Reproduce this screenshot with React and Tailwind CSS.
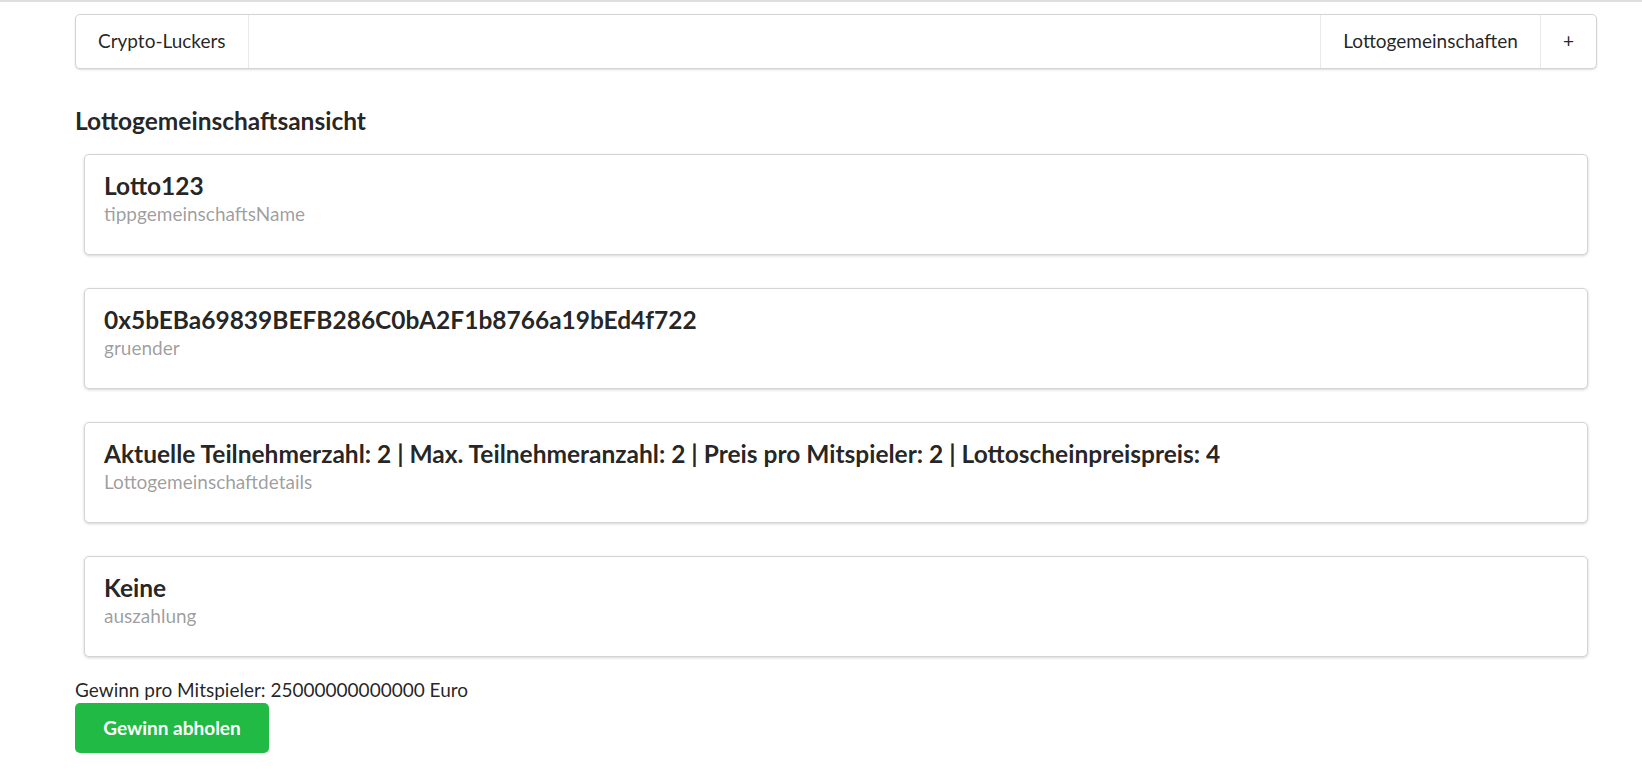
const cards = [
  { header: 'Lotto123', meta: 'tippgemeinschaftsName' },
  { header: '0x5bEBa69839BEFB286C0bA2F1b8766a19bEd4f722', meta: 'gruender' },
  {
    header:
      'Aktuelle Teilnehmerzahl: 2 | Max. Teilnehmeranzahl: 2 | Preis pro Mitspieler: 2 | Lottoscheinpreispreis: 4',
    meta: 'Lottogemeinschaftdetails',
  },
  { header: 'Keine', meta: 'auszahlung' },
]

export default function App() {
  return (
    <div className="min-h-screen border-t-2 border-[#dedede] bg-white font-['Lato',sans-serif] text-[19px] text-[rgba(0,0,0,0.87)]">
      <div className="ml-[75px] w-[1522px] pt-[12px]">
        <nav className="flex h-[55px] items-stretch rounded-[5px] border border-[#d4d4d5] bg-white shadow-[0_1px_2px_0_rgba(34,36,38,0.15)]">
          <a className="flex items-center border-r border-[rgba(34,36,38,0.1)] px-[22px]">Crypto-Luckers</a>
          <div className="flex-1" />
          <a className="flex items-center border-l border-[rgba(34,36,38,0.1)] px-[22px]">Lottogemeinschaften</a>
          <a className="flex items-center border-l border-[rgba(34,36,38,0.1)] px-[22px]">+</a>
        </nav>

        <h3 className="mt-[37px] text-[24.5px] font-bold leading-[29px]">Lottogemeinschaftsansicht</h3>

        <div className="mt-[19px] flex flex-col gap-[33px] px-[9px]">
          {cards.map((card) => (
            <div
              key={card.meta}
              className="h-[101px] rounded-[5px] border border-[#d4d4d5] bg-white px-[19px] pt-[16px] shadow-[0_1px_3px_0_#d4d4d5]"
            >
              <div className="text-[24.5px] font-bold leading-[30px]">{card.header}</div>
              <div className="leading-[26px] text-[rgba(0,0,0,0.4)]">{card.meta}</div>
            </div>
          ))}
        </div>

        <p className="mt-[19px] leading-[27px]">Gewinn pro Mitspieler: 25000000000000 Euro</p>
        <button className="h-[50px] w-[194px] rounded-[5px] bg-[#21ba45] font-bold text-white">
          Gewinn abholen
        </button>
      </div>
    </div>
  )
}
